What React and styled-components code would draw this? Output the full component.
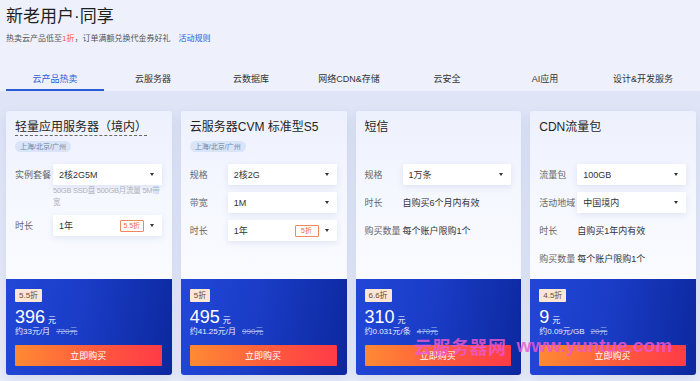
import React from "react";
import styled, { createGlobalStyle } from "styled-components";

const GlobalStyle = createGlobalStyle`
  html, body {
    margin: 0;
    padding: 0;
    background: #eef1fc;
  }
  * {
    box-sizing: border-box;
  }
  body {
    font-family: "Liberation Sans", "Noto Sans CJK SC", sans-serif;
    color: #333;
  }
`;

const Page = styled.div`
  position: relative;
  width: 700px;
  height: 381px;
  overflow: hidden;
  background: #eef1fc;
`;

const Header = styled.header`
  padding: 6px 6px 0;
`;

const Title = styled.h1`
  margin: 0;
  font-size: 17px;
  line-height: 22px;
  font-weight: 400;
  color: #1f1f1f;
`;

const Subtitle = styled.p`
  margin: 5px 0 0;
  font-size: 8px;
  line-height: 12px;
  color: #555;
`;

const Accent = styled.span`
  color: #ff5a1f;
`;

const RuleLink = styled.a`
  margin-left: 8px;
  color: #2a5bd7;
  text-decoration: none;
`;

const Tabs = styled.nav`
  display: grid;
  grid-template-columns: repeat(7, 98px);
  margin-top: 22px;
  padding: 0 6px;
`;

const Tab = styled.div`
  height: 24px;
  display: flex;
  align-items: center;
  justify-content: center;
  font-size: 9px;
  color: ${(p) => (p.$active ? "#2a5bd7" : "#333")};
  border-bottom: 2px solid ${(p) => (p.$active ? "#2a5bd7" : "transparent")};
`;

const Shelf = styled.section`
  height: 290px;
  padding: 20px 4px 0 6px;
  background: linear-gradient(180deg, #dfe5f6 0%, #e4e9f8 60%, #e9edf9 100%);
`;

const CardGrid = styled.div`
  display: grid;
  grid-template-columns: repeat(4, 1fr);
  gap: 9px;
`;

const Card = styled.article`
  height: 264px;
  display: flex;
  flex-direction: column;
  border-radius: 3px;
  overflow: hidden;
  box-shadow: 0 4px 12px rgba(70, 90, 170, 0.14);
`;

const CardTop = styled.div`
  flex: 1;
  padding: 9px 10px 0 9px;
  background: linear-gradient(180deg, #edf1fd 0%, #f6f8ff 55%, #f9fbff 100%);
`;

const CardHead = styled.div`
  height: 44px;
  display: flex;
  flex-direction: column;
  align-items: flex-start;
`;

const CardTitle = styled.h2`
  margin: 0;
  font-size: 12px;
  line-height: 15px;
  font-weight: 400;
  color: #1f1f1f;
  border-bottom: 1px ${(p) => (p.$dashed ? "dashed #666" : "solid transparent")};
`;

const Region = styled.span`
  margin-top: 5px;
  height: 11px;
  padding: 0 5px;
  border-radius: 6px;
  background: #d9e4f8;
  color: #6f83a8;
  font-size: 7px;
  line-height: 11px;
`;

const Fields = styled.div`
  display: flex;
  flex-direction: column;
  gap: 7px;
`;

const Row = styled.div`
  display: flex;
  align-items: center;
  height: 21px;
`;

const Label = styled.span`
  width: 38px;
  flex-shrink: 0;
  font-size: 9px;
  color: #666;
  white-space: nowrap;
`;

const Value = styled.span`
  font-size: 9px;
  color: #333;
  white-space: nowrap;
`;

const Select = styled.div`
  flex: 1;
  height: 21px;
  display: flex;
  align-items: center;
  padding: 0 8px 0 6px;
  background: #fff;
  border-radius: 1px;
  box-shadow: 0 2px 6px rgba(60, 80, 150, 0.12);
  font-size: 9px;
  color: #333;
`;

const SelectText = styled.span`
  flex: 1;
`;

const OffBadge = styled.span`
  min-width: 24px;
  height: 12px;
  margin-right: 6px;
  padding: 0 2px;
  border: 1px solid #ec8a5c;
  border-radius: 1px;
  color: #ec6a3a;
  font-size: 7px;
  line-height: 10px;
  text-align: center;
`;

const Caret = styled.i`
  width: 0;
  height: 0;
  border-left: 2.5px solid transparent;
  border-right: 2.5px solid transparent;
  border-top: 3px solid #333;
`;

const Hint = styled.div`
  margin: 0 0 0 38px;
  font-size: 7.5px;
  line-height: 11.5px;
  letter-spacing: -0.25px;
  color: #aeb2bc;
  word-break: break-all;
`;

const Group = styled.div``;

const CardBottom = styled.div`
  height: 96px;
  display: flex;
  flex-direction: column;
  align-items: flex-start;
  padding: 10px 10px 0 9px;
  background: linear-gradient(100deg, #2247d8 0%, #1a3cc6 45%, #0c289e 100%);
`;

const Discount = styled.span`
  height: 13px;
  padding: 0 4px;
  border-radius: 1px;
  background: #fde6d6;
  color: #6b4a35;
  font-size: 8px;
  line-height: 13px;
`;

const Price = styled.div`
  margin-top: 5px;
  height: 20px;
  font-size: 18px;
  line-height: 20px;
  color: #fff;
`;

const Unit = styled.span`
  margin-left: 3px;
  font-size: 8px;
`;

const PerUnit = styled.div`
  height: 10px;
  font-size: 8px;
  line-height: 10px;
  color: #e8ecff;
`;

const Original = styled.s`
  margin-left: 6px;
  color: #9fb2ee;
`;

const BuyButton = styled.button`
  display: block;
  width: 100%;
  height: 21px;
  margin-top: 8px;
  border: 0;
  border-radius: 1px;
  background: linear-gradient(90deg, #ff8a33 0%, #ff5a3e 55%, #ff3b47 100%);
  color: #fff;
  font-family: inherit;
  font-size: 9px;
  cursor: pointer;
`;

const Watermark = styled.div`
  position: absolute;
  left: 414px;
  top: 333px;
  display: flex;
  align-items: center;
  gap: 10px;
  color: rgba(236, 88, 208, 0.82);
  font-weight: 700;
  pointer-events: none;
  white-space: nowrap;
`;

const WatermarkCn = styled.span`
  font-family: "Noto Sans CJK SC", sans-serif;
  font-size: 18px;
  letter-spacing: 0.5px;
`;

const WatermarkEn = styled.span`
  font-family: "Liberation Sans", sans-serif;
  font-size: 19px;
`;

const tabs = ["云产品热卖", "云服务器", "云数据库", "网络CDN&存储", "云安全", "AI应用", "设计&开发服务"];

const products = [
  {
    title: "轻量应用服务器（境内）",
    dashed: true,
    region: "上海/北京/广州",
    fields: [
      { label: "实例套餐", select: "2核2G5M", hint: "50GB SSD盘 500GB月流量 5M带宽" },
      { label: "时长", select: "1年", off: "5.5折" },
    ],
    discount: "5.5折",
    price: "396",
    per: "约33元/月",
    original: "720元",
  },
  {
    title: "云服务器CVM 标准型S5",
    region: "上海/北京/广州",
    fields: [
      { label: "规格", select: "2核2G" },
      { label: "带宽", select: "1M" },
      { label: "时长", select: "1年", off: "5折" },
    ],
    discount: "5折",
    price: "495",
    per: "约41.25元/月",
    original: "990元",
  },
  {
    title: "短信",
    fields: [
      { label: "规格", select: "1万条" },
      { label: "时长", text: "自购买6个月内有效" },
      { label: "购买数量", text: "每个账户限购1个" },
    ],
    discount: "6.6折",
    price: "310",
    per: "约0.031元/条",
    original: "470元",
  },
  {
    title: "CDN流量包",
    fields: [
      { label: "流量包", select: "100GB" },
      { label: "活动地域", select: "中国境内" },
      { label: "时长", text: "自购买1年内有效" },
      { label: "购买数量", text: "每个账户限购1个" },
    ],
    discount: "4.5折",
    price: "9",
    per: "约0.09元/GB",
    original: "20元",
  },
];

const Field = ({ field }) => (
  <Group>
    <Row>
      <Label>{field.label}</Label>
      {field.select ? (
        <Select>
          <SelectText>{field.select}</SelectText>
          {field.off && <OffBadge>{field.off}</OffBadge>}
          <Caret />
        </Select>
      ) : (
        <Value>{field.text}</Value>
      )}
    </Row>
    {field.hint && <Hint>{field.hint}</Hint>}
  </Group>
);

const ProductCard = ({ item }) => (
  <Card>
    <CardTop>
      <CardHead>
        <CardTitle $dashed={item.dashed}>{item.title}</CardTitle>
        {item.region && <Region>{item.region}</Region>}
      </CardHead>
      <Fields>
        {item.fields.map((f) => (
          <Field key={f.label} field={f} />
        ))}
      </Fields>
    </CardTop>
    <CardBottom>
      <Discount>{item.discount}</Discount>
      <Price>
        {item.price}
        <Unit>元</Unit>
      </Price>
      <PerUnit>
        {item.per}
        <Original>{item.original}</Original>
      </PerUnit>
      <BuyButton>立即购买</BuyButton>
    </CardBottom>
  </Card>
);

const App = () => {
  return (
    <Page>
      <GlobalStyle />
      <Header>
        <Title>新老用户·同享</Title>
        <Subtitle>
          热卖云产品低至<Accent>1折</Accent>，订单满额兑换代金券好礼
          <RuleLink href="#">活动规则</RuleLink>
        </Subtitle>
      </Header>
      <Tabs>
        {tabs.map((t, i) => (
          <Tab key={t} $active={i === 0}>
            {t}
          </Tab>
        ))}
      </Tabs>
      <Shelf>
        <CardGrid>
          {products.map((p) => (
            <ProductCard key={p.title} item={p} />
          ))}
        </CardGrid>
      </Shelf>
      <Watermark>
        <WatermarkCn>云服务器网</WatermarkCn>
        <WatermarkEn>www.yuntue.com</WatermarkEn>
      </Watermark>
    </Page>
  );
};

export default App;
